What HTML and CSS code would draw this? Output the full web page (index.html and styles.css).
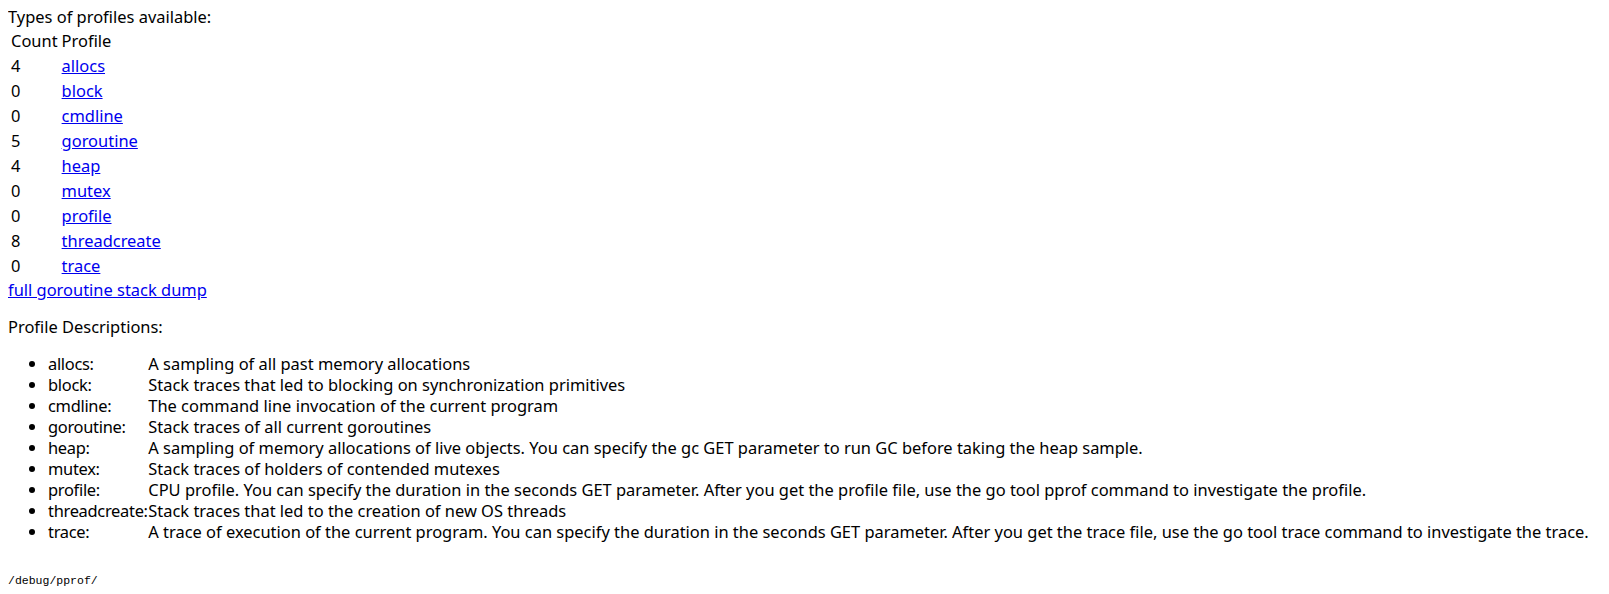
FILE: index.html
```html
<!DOCTYPE html>
<html>
<head>
<meta charset="utf-8">
<title>/debug/pprof/</title>
<link rel="stylesheet" href="styles.css">
</head>
<body class="page">
<div class="intro">Types of profiles available:</div>
<table class="profiles">
<thead><tr><td>Count</td><td>Profile</td></tr></thead>
<tbody>
<tr><td>4</td><td><a href="#">allocs</a></td></tr>
<tr><td>0</td><td><a href="#">block</a></td></tr>
<tr><td>0</td><td><a href="#">cmdline</a></td></tr>
<tr><td>5</td><td><a href="#">goroutine</a></td></tr>
<tr><td>4</td><td><a href="#">heap</a></td></tr>
<tr><td>0</td><td><a href="#">mutex</a></td></tr>
<tr><td>0</td><td><a href="#">profile</a></td></tr>
<tr><td>8</td><td><a href="#">threadcreate</a></td></tr>
<tr><td>0</td><td><a href="#">trace</a></td></tr>
</tbody>
</table>
<a class="dump" href="#">full goroutine stack dump</a>
<p class="desc-title">Profile Descriptions:</p>
<ul class="desc-list">
<li><div class="profile-name">allocs: </div> A sampling of all past memory allocations</li>
<li><div class="profile-name">block: </div> Stack traces that led to blocking on synchronization primitives</li>
<li><div class="profile-name">cmdline: </div> The command line invocation of the current program</li>
<li><div class="profile-name">goroutine: </div> Stack traces of all current goroutines</li>
<li><div class="profile-name">heap: </div> A sampling of memory allocations of live objects. You can specify the gc GET parameter to run GC before taking the heap sample.</li>
<li><div class="profile-name">mutex: </div> Stack traces of holders of contended mutexes</li>
<li><div class="profile-name">profile: </div> CPU profile. You can specify the duration in the seconds GET parameter. After you get the profile file, use the go tool pprof command to investigate the profile.</li>
<li><div class="profile-name">threadcreate: </div> Stack traces that led to the creation of new OS threads</li>
<li><div class="profile-name">trace: </div> A trace of execution of the current program. You can specify the duration in the seconds GET parameter. After you get the trace file, use the go tool trace command to investigate the trace.</li>
</ul>
<div class="path">/debug/pprof/</div>
</body>
</html>
```
FILE: styles.css
```css
html, body {
  background: #ffffff;
}
.page {
  margin: 6px 8px 8px 8px;
  font-family: "Noto Sans", "Open Sans", sans-serif;
  font-size: 16.45px;
  line-height: 21px;
  color: #000000;
}
.page a {
  color: #0000ee;
  text-decoration: underline;
}
.intro {
  display: block;
}
.profiles {
  border-spacing: 2px;
  border-collapse: separate;
}
.profiles td {
  padding: 1px;
  text-align: left;
  vertical-align: middle;
}
.dump {
  display: inline;
}
.desc-title {
  margin: 16px 0 16px 0;
}
.desc-list {
  margin: 16px 0 0 0;
  padding-left: 40px;
}
.profile-name {
  display: inline-block;
  width: 6rem;
  letter-spacing: -0.3px;
  white-space: nowrap;
}
.path {
  margin-top: 31px;
  font-family: "Liberation Mono", "DejaVu Sans Mono", monospace;
  font-size: 11.5px;
  line-height: 15px;
}
```
